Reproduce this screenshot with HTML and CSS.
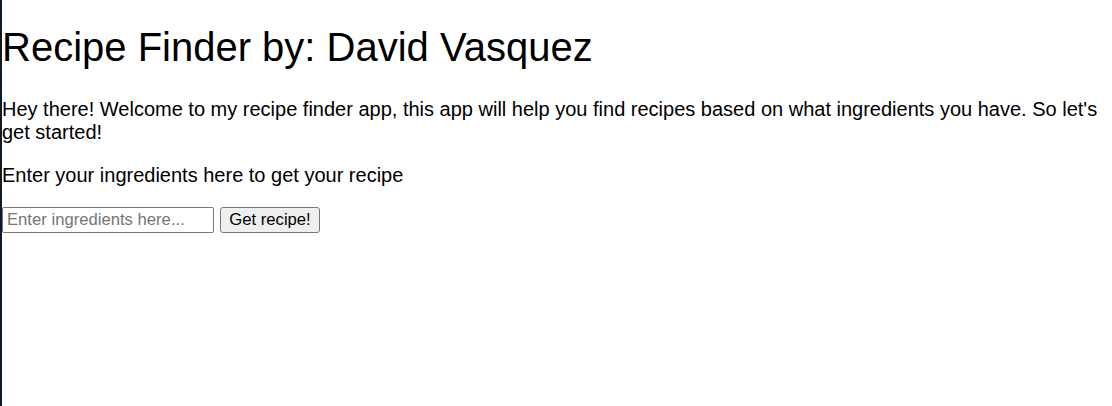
FILE: index.html
```html
<!DOCTYPE html>
<html lang="en">
<head>
<meta charset="utf-8">
<title>Recipe Finder</title>
<link rel="stylesheet" href="styles.css">
</head>
<body>
<div class="page">
  <h1 class="title">Recipe Finder by: David Vasquez</h1>
  <p class="text">Hey there! Welcome to my recipe finder app, this app will help you find recipes based on what ingredients you have. So let's get started!</p>
  <p class="text">Enter your ingredients here to get your recipe</p>
  <form class="search">
    <input class="field" type="text" placeholder="Enter ingredients here...">
    <button class="btn" type="button">Get recipe!</button>
  </form>
</div>
</body>
</html>
```
FILE: styles.css
```css
html, body {
  margin: 0;
  padding: 0;
  background: #ffffff;
}
body {
  font-family: "Liberation Sans", Arial, sans-serif;
  font-size: 20px;
  color: #000;
}
.page {
  min-height: 406px;
  border-left: 2px solid #0e1a28;
  padding-top: 0.1px;
  box-sizing: border-box;
}
.title {
  font-size: 40px;
  font-weight: normal;
  margin: 24px 0 28px 0;
  line-height: 46px;
}
.text {
  margin: 20px 0;
  line-height: 23px;
}
.search {
  display: flex;
  align-items: center;
  gap: 6px;
  margin-top: 20px;
}
.field {
  box-sizing: border-box;
  width: 212px;
  height: 26px;
  margin: 0;
  padding: 1px 4px;
  font-family: "Liberation Sans", Arial, sans-serif;
  font-size: 16.67px;
  border: 1px solid #767676;
  border-radius: 2px;
  background: #fff;
}
.field::placeholder {
  color: #757575;
}
.btn {
  box-sizing: border-box;
  width: 100px;
  height: 26px;
  margin: 0;
  padding: 1px 8px;
  font-family: "Liberation Sans", Arial, sans-serif;
  font-size: 16.67px;
  color: #000;
  background: #efefef;
  border: 1px solid #767676;
  border-radius: 3px;
}
```
